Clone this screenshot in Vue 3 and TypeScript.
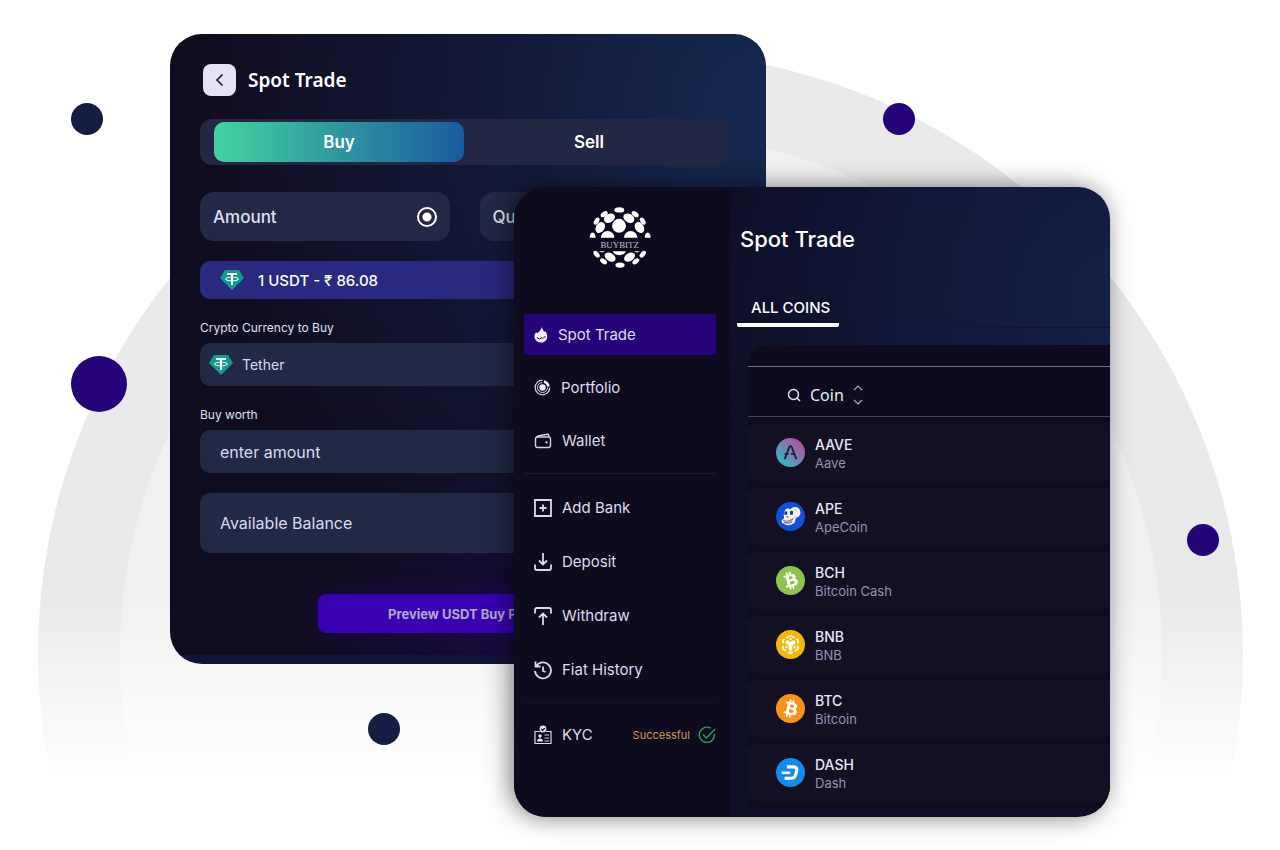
<script setup lang="ts">
import { ref } from 'vue'

type Side = 'Buy' | 'Sell'
interface NavItem { label: string; icon: string }
interface Coin { symbol: string; name: string }

const sides: Side[] = ['Buy', 'Sell']
const side = ref<Side>('Buy')
const mode = ref('Amount')
const amount = ref('')
const currency = ref('Tether')

const tradeNav: NavItem[] = [
  { label: 'Spot Trade', icon: 'flame' },
  { label: 'Portfolio', icon: 'rings' },
  { label: 'Wallet', icon: 'wallet' },
]
const bankNav: NavItem[] = [
  { label: 'Add Bank', icon: 'add' },
  { label: 'Deposit', icon: 'deposit' },
  { label: 'Withdraw', icon: 'withdraw' },
  { label: 'Fiat History', icon: 'history' },
]
const coins: Coin[] = [
  { symbol: 'AAVE', name: 'Aave' },
  { symbol: 'APE', name: 'ApeCoin' },
  { symbol: 'BCH', name: 'Bitcoin Cash' },
  { symbol: 'BNB', name: 'BNB' },
  { symbol: 'BTC', name: 'Bitcoin' },
  { symbol: 'DASH', name: 'Dash' },
]
const bitcoinMark =
  'M23.189 14.02c.314-2.096-1.283-3.223-3.465-3.975l.708-2.84-1.728-.43-.69 2.765c-.454-.114-.92-.22-1.385-.326l.695-2.783L15.596 6l-.708 2.839c-.376-.086-.746-.17-1.104-.26l.002-.009-2.384-.595-.46 1.846s1.283.294 1.256.312c.7.175.826.638.805 1.006l-.806 3.235c.048.012.11.03.18.057l-.183-.045-1.13 4.532c-.086.212-.303.531-.793.41.018.025-1.256-.313-1.256-.313l-.858 1.978 2.25.561c.418.105.828.215 1.231.318l-.715 2.872 1.727.43.708-2.84c.472.127.93.245 1.378.357l-.706 2.828 1.728.43.715-2.866c2.948.558 5.164.333 6.097-2.333.752-2.146-.037-3.385-1.588-4.192 1.13-.26 1.98-1.003 2.207-2.538zm-3.95 5.538c-.533 2.147-4.148.986-5.32.695l.95-3.805c1.172.293 4.929.872 4.37 3.11zm.535-5.569c-.487 1.953-3.495.96-4.47.717l.86-3.45c.975.243 4.118.696 3.61 2.733z'
</script>

<template>
  <main class="stage">
    <svg class="backdrop" viewBox="0 0 1280 850" aria-hidden="true">
      <defs>
        <linearGradient id="outer" gradientUnits="userSpaceOnUse" x1="0" y1="600" x2="0" y2="785">
          <stop offset="0" stop-color="#eaeaea" />
          <stop offset="1" stop-color="#ffffff" />
        </linearGradient>
        <linearGradient id="inner" gradientUnits="userSpaceOnUse" x1="0" y1="600" x2="0" y2="785">
          <stop offset="0" stop-color="#f1f1f1" />
          <stop offset="1" stop-color="#ffffff" />
        </linearGradient>
      </defs>
      <circle cx="640.5" cy="654" r="602.5" fill="url(#outer)" />
      <circle cx="641" cy="654" r="521" fill="url(#inner)" />
      <circle cx="87" cy="119" r="16" fill="#141d42" />
      <circle cx="99" cy="384" r="28" fill="#240478" />
      <circle cx="384" cy="729" r="16" fill="#141d42" />
      <circle cx="899" cy="119" r="16" fill="#240478" />
      <circle cx="1203" cy="540" r="16" fill="#240478" />
    </svg>

    <section class="card order">
      <header class="order-head">
        <button class="back" type="button" aria-label="Back">
          <svg width="14" height="16" viewBox="0 0 14 16"><path d="M9.5 2.5 4 8l5.500 5.500" fill="none" stroke="#15142b" stroke-width="1.600" /></svg>
        </button>
        <h1>Spot Trade</h1>
      </header>

      <div class="tabs" role="tablist">
        <button v-for="s in sides" :key="s" type="button" role="tab" class="tab"
          :class="{ active: side === s }" :aria-selected="side === s" @click="side = s">{{ s }}</button>
      </div>

      <div class="modes">
        <label v-for="m in ['Amount', 'Quantity']" :key="m" class="mode">
          <span>{{ m }}</span>
          <input v-model="mode" type="radio" name="mode" :value="m" />
        </label>
      </div>

      <p class="rate">
        <svg class="tether" viewBox="0 0 24 20"><path d="M5 0h14l5 8-12 12L0 8z" fill="#149b8c" /><path d="M7 4h10M12 4v11" stroke="#fff" stroke-width="2" fill="none" /><ellipse cx="12" cy="9" rx="6.500" ry="1.800" stroke="#fff" stroke-width="1" fill="none" /></svg>
        <span>1 USDT - ₹ 86.08</span>
      </p>

      <label class="caption" for="currency">Crypto Currency to Buy</label>
      <div class="field coin-field">
        <svg class="tether" viewBox="0 0 24 20"><path d="M5 0h14l5 8-12 12L0 8z" fill="#149b8c" /><path d="M7 4h10M12 4v11" stroke="#fff" stroke-width="2" fill="none" /><ellipse cx="12" cy="9" rx="6.500" ry="1.800" stroke="#fff" stroke-width="1" fill="none" /></svg>
        <select id="currency" v-model="currency"><option>Tether</option></select>
      </div>

      <label class="caption" for="worth">Buy worth</label>
      <div class="field"><input id="worth" v-model="amount" type="text" placeholder="enter amount" /></div>

      <div class="field balance">Available Balance</div>

      <button class="preview" type="button">Preview USDT Buy Price</button>
    </section>

    <section class="card market">
      <aside class="side">
        <svg class="logo" viewBox="42 30 186 188" role="img" aria-label="BUYBITZ">
          <g fill="#fff">
            <ellipse cx="133" cy="42" rx="15" ry="8" />
            <ellipse cx="87" cy="55" rx="12" ry="7" transform="rotate(-35 87 55)" />
            <ellipse cx="181" cy="55" rx="12" ry="7" transform="rotate(35 181 55)" />
            <ellipse cx="103" cy="67" rx="18" ry="13" transform="rotate(-32 103 67)" />
            <ellipse cx="162" cy="67" rx="18" ry="13" transform="rotate(32 162 67)" />
            <circle cx="132" cy="90" r="21" />
            <ellipse cx="64" cy="76" rx="7" ry="12" transform="rotate(32 64 76)" />
            <ellipse cx="204" cy="76" rx="7" ry="12" transform="rotate(-32 204 76)" />
            <ellipse cx="75" cy="95" rx="13" ry="18" transform="rotate(32 75 95)" />
            <ellipse cx="194" cy="95" rx="13" ry="18" transform="rotate(-32 194 95)" />
            <path d="M77 126a20 20 0 0 1 41 0zM147 126a20 20 0 0 1 41 0zM43 126a9 16 0 0 1 18 0zM210 126a9 16 0 0 1 18 0z" />
            <path d="M114 167h38a19 12 0 0 1-38 0zM70 167h20l-9 4zM176 167h20l-9 4z" />
            <ellipse cx="64" cy="176" rx="7" ry="12" transform="rotate(-40 64 176)" />
            <ellipse cx="204" cy="176" rx="7" ry="12" transform="rotate(40 204 176)" />
            <ellipse cx="105" cy="185" rx="18" ry="12" transform="rotate(32 105 185)" />
            <ellipse cx="164" cy="185" rx="18" ry="12" transform="rotate(-32 164 185)" />
            <ellipse cx="85" cy="198" rx="12" ry="7" transform="rotate(38 85 198)" />
            <ellipse cx="183" cy="198" rx="12" ry="7" transform="rotate(-38 183 198)" />
            <ellipse cx="135" cy="209" rx="14" ry="8" />
          </g>
          <text x="134" y="157" text-anchor="middle">BUYBITZ</text>
        </svg>

        <nav class="nav">
          <a v-for="(n, i) in tradeNav" :key="n.label" href="#" :class="{ current: i === 0 }">
            <svg v-if="n.icon === 'flame'" width="14" height="16" viewBox="0 0 14 16">
              <path d="M7.800 0c.2 1.800 1.700 3.200 2.300 5l.8-1C12.500 5.600 13.300 7.500 13.300 9.400 13.300 13 10.500 15.500 6.900 15.500S.5 13 .5 9.600C.5 7.700 1.200 6.200 2.500 5l.7 1.500C5 5 7.200 3 7.800 0z" fill="#f2effc" />
              <path d="m3 10.500 2.500 1.600L8 10.500l1 1L11.500 9" stroke="#240478" fill="none" />
            </svg>
            <svg v-else-if="n.icon === 'rings'" width="17" height="17" viewBox="0 0 17 17" fill="none" stroke="#d5d2e4">
              <path d="M8.500 1.200A7.300 7.300 0 1 0 15.800 8.500" stroke-width="1.300" />
              <path d="M8.500 3.500A5 5 0 1 0 13.500 8.500" />
              <circle cx="8.500" cy="8.500" r="3.200" fill="#f4f2ff" stroke="none" />
              <path d="M10 1.300a7.300 7.300 0 0 1 5.700 5.900l-2.400.5A5.200 5.200 0 0 0 9.800 3.700z" fill="#f4f2ff" stroke="none" />
            </svg>
            <svg v-else width="18" height="18" viewBox="0 0 18 18" fill="none" stroke="#d5d2e4" stroke-width="1.400">
              <rect x="1.500" y="5" width="15" height="10.500" rx="2" />
              <path d="M2 5.500 4 4l9.500-1.700c.8 0 1.300.5 1.300 1.300V5" />
              <path d="M12.500 9.300v2" stroke-width="2" />
            </svg>
            <span>{{ n.label }}</span>
          </a>
        </nav>
        <nav class="nav ruled bank">
          <a v-for="n in bankNav" :key="n.label" href="#">
            <svg width="18" height="20" viewBox="0 0 18 20" fill="none" stroke="#dcd9ee" stroke-width="1.800">
              <template v-if="n.icon === 'add'"><path d="M1 2h16v16H1zM9 6.500v7M5.500 10h7" /></template>
              <template v-else-if="n.icon === 'deposit'"><path d="M9 1v11M5 8.500l4 4 4-4M1 12.500V16q0 2 2 2h12q2 0 2-2v-3.500" /></template>
              <template v-else-if="n.icon === 'withdraw'"><path d="M9 19V8M5 11.500l4-4 4 4M1 7.500V4q0-2 2-2h12q2 0 2 2v3.500" /></template>
              <template v-else><path d="M2 6.500a8 8 0 1 1-1 4.500M1.500 1.500v5h5M9 6.500V11l2.500 1" /></template>
            </svg>
            <span>{{ n.label }}</span>
          </a>
        </nav>
        <nav class="nav ruled last">
          <a href="#">
            <svg width="18" height="20" viewBox="0 0 18 20" fill="none" stroke="#dcd9ee" stroke-width="1.200">
              <path d="M6 6.500H1v12h16v-12h-5" />
              <circle cx="9" cy="4" r="3.400" fill="#e8e6f6" stroke="none" />
              <path d="m7.300 4 1.300 1.300L10.900 3" stroke="#0f0c20" />
              <circle cx="6" cy="11" r="1.700" fill="#e8e6f6" stroke="none" />
              <path d="M3 16.500c0-4 6-4 6 0z" fill="#e8e6f6" stroke="none" />
              <path d="M10.500 10h4.500M10.500 13h4.500M10.500 16h4.500M3 18.500h12" />
            </svg>
            <span>KYC</span>
            <small>Successful</small>
            <svg width="18" height="18" viewBox="0 0 18 18" fill="none" stroke="#2e9a62" stroke-width="1.400">
              <path d="M12.800 2.200A7.600 7.600 0 1 0 16.500 8M5 8.500 8.500 12 17 3" />
            </svg>
          </a>
        </nav>
      </aside>

      <div class="main">
        <h2>Spot Trade</h2>
        <div class="filter"><button type="button">ALL COINS</button></div>
        <div class="panel">
          <table>
            <thead>
              <tr>
                <th scope="col">
                  <button type="button" class="sort">
                    <svg width="14" height="14" viewBox="0 0 14 14" fill="none" stroke="#e6e4f0" stroke-width="1.400"><circle cx="6.500" cy="6.500" r="5" /><path d="m9.500 9.500 3.500 3.500" /></svg>
                    <span>Coin</span>
                    <svg width="10" height="20" viewBox="0 0 10 20" fill="none" stroke="#a9a6bd" stroke-width="1.200"><path d="m1 5 4-4 4 4M1 15l4 4 4-4" /></svg>
                  </button>
                </th>
              </tr>
            </thead>
            <tbody>
              <tr v-for="c in coins" :key="c.symbol">
                <td>
                  <div class="coin">
                    <svg width="29" height="29" viewBox="0 0 32 32" aria-hidden="true">
                      <template v-if="c.symbol === 'AAVE'">
                        <defs><linearGradient id="aave" x1="0" y1="1" x2="1" y2="0"><stop offset="0.150" stop-color="#36b5c6" /><stop offset="0.850" stop-color="#b2509f" /></linearGradient></defs>
                        <circle cx="16" cy="16" r="16" fill="url(#aave)" />
                        <path d="m9.500 23.500 5.200-13.700q1.300-2.300 2.600 0L22.500 23.500M9.500 17.500h4.500M16.500 17.500h3" fill="none" stroke="#201a3c" stroke-width="2" />
                      </template>
                      <template v-else-if="c.symbol === 'APE'">
                        <circle cx="16" cy="16" r="16" fill="#1150dc" />
                        <path d="M10 8.500 13 7l3 1 2-2q4-1.500 7 1 3 3 1.500 7-1.500 3-4.500 3.500l-1.500 5.500q-4 3.500-9 2.500l-5-2.500-.5-2.500 3-2.500-.5-4z" fill="#f7f4ee" />
                        <path d="M9.500 11q1.500-1.500 3 0l-.5 3H9zM15.500 10.500q2-1.500 3.500 0l-.5 3.500h-3zM11 16.500l2-1 1 2z" fill="#1d2f9c" />
                        <path d="M8 20.500q6 2 11-2M9 22.500q5 1.500 9-1" stroke="#7a6a9a" stroke-width="1.200" fill="none" />
                        <path d="m20 8.500 3 1.500M21.500 15 20 18" stroke="#aab7dc" fill="none" />
                      </template>
                      <template v-else-if="c.symbol === 'BCH'">
                        <circle cx="16" cy="16" r="16" fill="#8dc351" />
                        <path :d="bitcoinMark" fill="#fff" transform="rotate(-28 16 16)" />
                      </template>
                      <template v-else-if="c.symbol === 'BNB'">
                        <circle cx="16" cy="16" r="16" fill="#f0b90b" />
                        <path d="M11.500 8.700 16 6.200l4.500 2.500M7.800 14.500V11l2-1.200M24.200 14.500V11l-2-1.200M7.800 17.500V21l3.500 2M24.200 17.500V21l-3.500 2M13.500 24.300 16 25.700l2.500-1.400" fill="none" stroke="#fff" stroke-width="1.800" />
                        <path d="m10.500 12.500 2-1.200 3.500 2 3.500-2 2 1.200v2.500L18 17v5.200L16 23.500l-2-1.300V17l-3.500-2zM14 10l2-1.200 2 1.200-2 1.200zM10.500 17l2 1.200v2.500l-2-1.200zM21.500 17l-2 1.200v2.500l2-1.200z" fill="#fff" />
                      </template>
                      <template v-else-if="c.symbol === 'BTC'">
                        <circle cx="16" cy="16" r="16" fill="#f7931a" />
                        <path :d="bitcoinMark" fill="#fff" />
                      </template>
                      <template v-else>
                        <circle cx="16" cy="16" r="16" fill="#118dea" />
                        <path d="M12 9.800h7.500q4.300 0 3.300 4.200l-1 4q-1 4.300-5 4.300H9.500" fill="none" stroke="#fff" stroke-width="3.400" />
                        <path d="M7.500 16.200h7" stroke="#fff" stroke-width="2.800" stroke-linecap="round" />
                      </template>
                    </svg>
                    <div class="names"><strong>{{ c.symbol }}</strong><span>{{ c.name }}</span></div>
                  </div>
                </td>
              </tr>
            </tbody>
          </table>
        </div>
      </div>
    </section>
  </main>
</template>

<style>
body { margin: 0; background: #fff; }
</style>

<style scoped>
* { box-sizing: border-box; }
button, input, select { font: inherit; color: inherit; border: 0; background: none; padding: 0; margin: 0; }
h1, h2, p { margin: 0; }
svg { flex: none; display: block; }

.stage {
  position: relative;
  display: grid;
  grid-template-columns: 170fr 344fr 252fr 344fr 170fr;
  align-items: start;
  padding-bottom: 33px;
  overflow: hidden;
  font-family: Inter, "Liberation Sans", sans-serif;
  color: #fff;
}
.backdrop { position: absolute; top: 0; left: 0; width: 100%; }
.card { position: relative; grid-row: 1; border-radius: 32px; min-width: 0; overflow: hidden; }

.order {
  grid-column: 2 / 4;
  margin-top: 34px;
  padding: 30px 37px 31px 30px;
  display: flex;
  flex-direction: column;
  background:
    linear-gradient(0deg, #14133a 9px, transparent 9px),
    radial-gradient(circle at 60% 100%, rgba(30, 10, 90, 0.5), transparent 28%),
    radial-gradient(ellipse 95% 90% at 100% 12%, #15274d 10%, #131a3a 45%, transparent 100%),
    #100c20;
}
.order-head { display: flex; align-items: center; gap: 12px; padding-left: 3px; height: 32px; }
.back { width: 33px; height: 32px; border-radius: 8px; background: #e4e3f2; display: grid; place-items: center; }
h1 { font: 600 19px/32px "Noto Sans", sans-serif; }
.tabs { display: flex; margin-top: 23px; padding: 3px 15px 3px 14px; border-radius: 12px; background: #222743; }
.tab { flex: 1; height: 40px; border-radius: 10px; font-size: 17px; font-weight: 600; }
.tab.active { background: linear-gradient(90deg, #44d3a1, #1a5a9f); }
.modes { display: grid; grid-template-columns: 1fr 1fr; gap: 30px; margin-top: 27px; }
.mode { display: flex; align-items: center; justify-content: space-between; height: 49px; padding: 0 13px; border-radius: 14px; background: #222845; color: #dfe0f3; font-size: 17px; font-weight: 500; }
.mode input { appearance: none; width: 20px; height: 20px; border: 2px solid #fff; border-radius: 50%; }
.mode input:checked { background: radial-gradient(circle, #fff 4px, transparent 5px); }
.rate { display: flex; align-items: center; gap: 14px; height: 38px; margin-top: 20px; padding-left: 20px; border-radius: 10px; background: #2a2980; font-size: 15px; font-weight: 500; }
.tether { width: 24px; height: 20px; }
.caption { margin-top: 20px; font-size: 12px; line-height: 17px; color: #dfe0ee; }
.field { display: flex; align-items: center; height: 43px; padding: 0 20px; border-radius: 10px; background: #222945; color: #d8dbef; font-size: 16px; }
.caption + .field { margin-top: 7px; }
.coin-field { padding-left: 9px; gap: 9px; font-size: 14px; }
.field select, .field input { appearance: none; width: 100%; outline: none; }
.field input::placeholder { color: #d8dbef; opacity: 1; }
.balance { height: 60px; margin-top: 20px; }
.preview { align-self: center; width: 294px; height: 39px; margin-top: 41px; border-radius: 8px; background: #3801b2; box-shadow: 0 0 24px rgba(56, 1, 178, 0.25); color: #b4a9d0; font-size: 13px; font-weight: 700; }

.market {
  grid-column: 3 / 5;
  margin-top: 187px;
  display: flex;
  background: radial-gradient(ellipse 66% 70% at 100% 18%, #132046, #11183a 50%, #0f102a 90%, #0e0e26);
  box-shadow: -4px 0 24px rgba(0, 0, 0, 0.5);
}
.side { flex: none; width: 216px; padding: 19px 14px 0 10px; background: #0f0b1f; }
.logo { width: 62px; height: 62px; margin: 0 auto; }
.logo text { font: 27px "Liberation Serif", serif; fill: #c3c1cc; }
.nav { display: flex; flex-direction: column; gap: 12px; margin-top: 46px; }
.nav a { display: flex; align-items: center; gap: 10px; height: 41px; padding-left: 10px; border-radius: 3px; color: #dedbee; font-size: 15px; text-decoration: none; }
.nav a.current { background: #240478; }
.nav.ruled { margin-top: 12px; border-top: 1px solid #1d1a38; padding-top: 13px; }
.nav.bank { gap: 13px; }
.nav.last { border-color: #15122a; padding-top: 11px; }
.nav small { margin-left: auto; font-size: 11px; color: #d09a4c; }
.nav small + svg { margin-left: -2px; }

.main { flex: 1; min-width: 0; padding-top: 32px; }
h2 { padding-left: 10px; font-size: 22px; font-weight: 500; line-height: 40px; }
.filter { margin: 32px 0 0 7px; border-bottom: 1px solid #101632; }
.filter button { display: block; height: 36px; padding: 0 9px 0 14px; border-bottom: 4px solid #fff; border-radius: 2px; font-size: 15px; font-weight: 500; }
.panel { margin: 17px 0 9px 18px; padding-top: 14px; background: #0f0b1f; border-radius: 20px 0 0 10px; }
table { width: 100%; border-collapse: separate; border-spacing: 0 7px; }
th { height: 51px; padding: 6px 0 0 39px; border-top: 1px solid #6f6d80; border-bottom: 1px solid #45435a; text-align: left; font-weight: 400; }
.sort { display: flex; align-items: center; gap: 9px; font: 16px/24px "Noto Sans", sans-serif; color: #e9e8f2; }
td { height: 57px; padding: 0 0 0 28px; background: #141024; border-radius: 8px 0 0 8px; }
.coin { display: flex; align-items: center; gap: 10px; }
.names { display: flex; flex-direction: column; padding-top: 3px; }
.names strong { font-size: 14px; font-weight: 500; line-height: 18px; color: #e9e6f5; }
.names span { font-size: 13px; line-height: 18px; color: #9691b4; }
</style>
